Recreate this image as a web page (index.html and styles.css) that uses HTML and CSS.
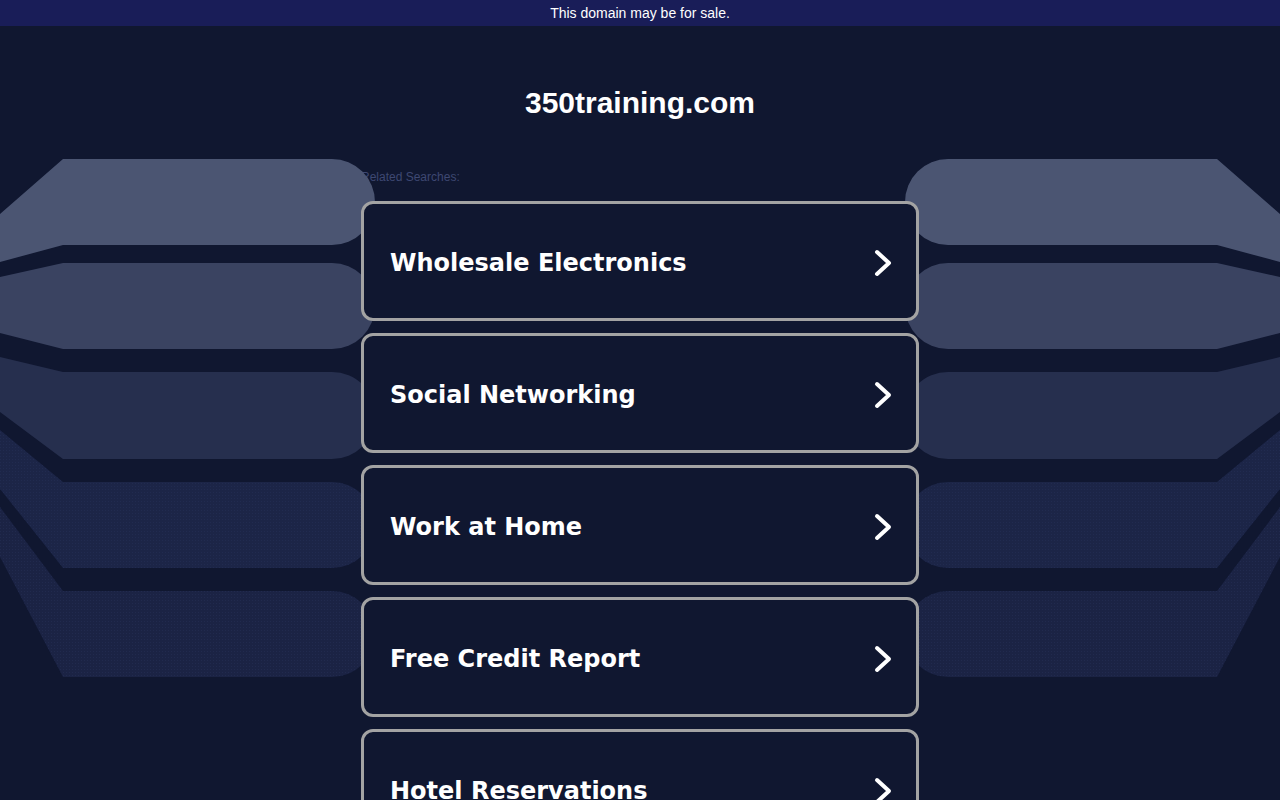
FILE: index.html
```html
<!DOCTYPE html>
<html lang="en">
<head>
<meta charset="utf-8">
<title>350training.com</title>
<link rel="stylesheet" href="styles.css">
</head>
<body>
<div class="topbar">This domain may be for sale.</div>
<svg class="bands" viewBox="0 0 1280 800" width="1280" height="800" aria-hidden="true">
  <defs>
    <pattern id="dots" width="3" height="3" patternUnits="userSpaceOnUse">
      <rect x="0" y="0" width="1" height="1" fill="#2a3560" opacity="0.35"/>
    </pattern>
    <g id="side">
      <path d="M0,214 L63,159 L332,159 A43,43 0 0 1 332,245 L63,245 L0,262 Z" fill="#4b5572"/>
      <path d="M0,277 L63,263 L332,263 A43,43 0 0 1 332,349 L63,349 L0,333 Z" fill="#3a4361"/>
      <path d="M0,357 L63,372 L332,372 A43,43 0 0 1 332,459 L63,459 L0,412 Z" fill="#262f4e"/>
      <path d="M0,430 L63,482 L332,482 A43,43 0 0 1 332,568 L63,568 L0,489 Z" fill="#1c2547"/>
      <path d="M0,430 L63,482 L332,482 A43,43 0 0 1 332,568 L63,568 L0,489 Z" fill="url(#dots)"/>
      <path d="M0,507 L63,591 L332,591 A43,43 0 0 1 332,677 L63,677 L0,557 Z" fill="#1b2344"/>
      <path d="M0,507 L63,591 L332,591 A43,43 0 0 1 332,677 L63,677 L0,557 Z" fill="url(#dots)"/>
    </g>
  </defs>
  <use href="#side"/>
  <use href="#side" transform="translate(1280,0) scale(-1,1)"/>
</svg>
<main class="main">
  <h1 class="domain">350training.com</h1>
  <div class="label">Related Searches:</div>
  <ul class="list">
    <li class="card"><span class="card-text">Wholesale Electronics</span><svg class="chev" viewBox="0 0 22 30" width="22" height="30"><path d="M5,4 L17,15 L5,26" fill="none" stroke="#fff" stroke-width="4" stroke-linecap="round" stroke-linejoin="round"/></svg></li>
    <li class="card"><span class="card-text">Social Networking</span><svg class="chev" viewBox="0 0 22 30" width="22" height="30"><path d="M5,4 L17,15 L5,26" fill="none" stroke="#fff" stroke-width="4" stroke-linecap="round" stroke-linejoin="round"/></svg></li>
    <li class="card"><span class="card-text">Work at Home</span><svg class="chev" viewBox="0 0 22 30" width="22" height="30"><path d="M5,4 L17,15 L5,26" fill="none" stroke="#fff" stroke-width="4" stroke-linecap="round" stroke-linejoin="round"/></svg></li>
    <li class="card"><span class="card-text">Free Credit Report</span><svg class="chev" viewBox="0 0 22 30" width="22" height="30"><path d="M5,4 L17,15 L5,26" fill="none" stroke="#fff" stroke-width="4" stroke-linecap="round" stroke-linejoin="round"/></svg></li>
    <li class="card"><span class="card-text">Hotel Reservations</span><svg class="chev" viewBox="0 0 22 30" width="22" height="30"><path d="M5,4 L17,15 L5,26" fill="none" stroke="#fff" stroke-width="4" stroke-linecap="round" stroke-linejoin="round"/></svg></li>
  </ul>
</main>
</body>
</html>
```
FILE: styles.css
```css
html, body {
  margin: 0;
  padding: 0;
}
body {
  background: #101730;
  font-family: "Liberation Sans", Arial, sans-serif;
  color: #fff;
  overflow: hidden;
}
.topbar {
  height: 26px;
  line-height: 26px;
  background: #191d58;
  text-align: center;
  font-size: 14px;
  color: #fff;
}
.bands {
  position: absolute;
  left: 0;
  top: 0;
  z-index: 0;
}
.main {
  width: 558px;
  margin: 0 auto;
}
.domain {
  margin: 0;
  padding-top: 59px;
  height: 35px;
  line-height: 35px;
  text-align: center;
  font-size: 30px;
  font-weight: bold;
  color: #fff;
}
.label {
  margin-top: 50px;
  font-size: 12px;
  line-height: 14px;
  color: #3e4872;
}
.list {
  list-style: none;
  margin: 17px 0 0;
  padding: 0;
  display: flex;
  flex-direction: column;
  gap: 12px;
}
.card {
  position: relative;
  z-index: 1;
  box-sizing: border-box;
  height: 120px;
  border: 3px solid #a3a3a3;
  border-radius: 12px;
  background: #101730;
  display: flex;
  align-items: center;
  justify-content: space-between;
  padding: 3px 22px 0 26px;
}
.card-text {
  font-family: "DejaVu Sans", Verdana, sans-serif;
  font-weight: bold;
  font-size: 24px;
  color: #fff;
}
.chev {
  display: block;
}
```
